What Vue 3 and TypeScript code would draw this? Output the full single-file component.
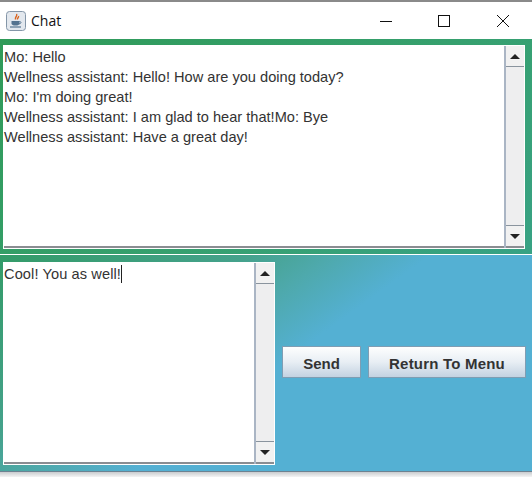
<script setup lang="ts">
const lines: string[] = [
  'Mo: Hello',
  'Wellness assistant: Hello! How are you doing today?',
  "Mo: I'm doing great!",
  'Wellness assistant: I am glad to hear that!Mo: Bye',
  'Wellness assistant: Have a great day!',
]
</script>

<template>
  <div class="window">
    <header class="titlebar">
      <div class="title-left">
        <svg class="java-icon" width="20" height="20" viewBox="0 0 20 20">
          <rect x="0.5" y="0.5" width="19" height="19" rx="3" fill="#e3e8ee" stroke="#8496a8" />
          <path d="M10.5 3c1.5 1.8-2 3 -1 5.5M12.5 5c.6 1.4-1.6 2-1 3.5" fill="none" stroke="#d9641e" stroke-width="1.4" />
          <path d="M5.5 10h8v2.2c0 1.5-1.5 2.3-4 2.3s-4-.8-4-2.3z" fill="#54738f" />
          <path d="M13.5 10.5c2 0 2 2.2-.5 2.4" fill="none" stroke="#54738f" />
          <path d="M4 16h11" stroke="#54738f" stroke-width="1.2" />
        </svg>
        <span class="title">Chat</span>
      </div>
      <div class="controls">
        <svg width="12" height="12" viewBox="0 0 12 12"><path d="M0 6.5h12" stroke="#111" /></svg>
        <svg width="12" height="12" viewBox="0 0 12 12"><rect x="0.5" y="0.5" width="11" height="11" fill="none" stroke="#111" /></svg>
        <svg width="14" height="14" viewBox="0 0 14 14"><path d="M1 1l12 12M13 1L1 13" stroke="#111" /></svg>
      </div>
    </header>

    <main class="content">
      <section class="panel top-panel">
        <div class="scroll-area log">
          <div class="text">
            <div v-for="line in lines" :key="line">{{ line }}</div>
          </div>
          <div class="scrollbar">
            <div class="arrow-btn"><span class="tri up"></span></div>
            <div class="track"></div>
            <div class="arrow-btn bottom"><span class="tri down"></span></div>
          </div>
        </div>
      </section>

      <section class="panel bottom-panel">
        <div class="scroll-area input">
          <div class="text"><span>Cool! You as well!</span><span class="caret"></span></div>
          <div class="scrollbar">
            <div class="arrow-btn"><span class="tri up"></span></div>
            <div class="track"></div>
            <div class="arrow-btn bottom"><span class="tri down"></span></div>
          </div>
        </div>
        <div class="buttons">
          <button class="btn send">Send</button>
          <button class="btn menu">Return To Menu</button>
        </div>
      </section>
    </main>
    <div class="shadow"></div>
  </div>
</template>

<style>
html, body { margin: 0; background: #fff; }
</style>

<style scoped>
.window {
  width: 532px;
  height: 477px;
  display: flex;
  flex-direction: column;
  overflow: hidden;
  background: #fff;
  font-family: "Liberation Sans", Arial, sans-serif;
}
.titlebar {
  height: 39px;
  box-sizing: border-box;
  border-top: 2px solid #8a8a8a;
  display: flex;
  align-items: center;
  justify-content: space-between;
  padding: 0 22px 0 6px;
  flex: none;
}
.title-left { display: flex; align-items: center; gap: 5px; }
.java-icon { display: block; }
.title { font-family: "Open Sans", "Noto Sans", sans-serif; font-size: 14px; color: #111; }
.controls { display: flex; align-items: center; gap: 46px; }
.controls svg { display: block; }
.content { flex: none; height: 432px; display: flex; flex-direction: column; background: #fff; }
.panel { box-sizing: border-box; }
.top-panel {
  height: 215px;
  flex: none;
  padding: 6px 7px 0 3px;
  background: linear-gradient(144deg, #2f9a58 0%, #36a06e 55%, #38a284 100%);
}
.bottom-panel {
  flex: 1;
  margin-top: 1px;
  padding: 7px 6px 0 3px;
  display: flex;
  background: linear-gradient(144deg, #339b68 0%, #45a28c 30%, #4ea9ac 40%, #54b0d3 52%, #54b0d3 100%);
}
.scroll-area {
  box-sizing: border-box;
  display: flex;
  background: #fff;
  border: 1px solid #fff;
}
.log { width: 522px; height: 204px; }
.input { width: 272px; height: 203px; flex: none; }
.text {
  flex: 1;
  min-width: 0;
  padding: 1px 0 0 0;
  font-size: 14.6px;
  line-height: 20px;
  color: #333;
  border-bottom: 2px solid #8a8d92;
  background: #fff;
  white-space: nowrap;
}
.input .text { letter-spacing: 0.1px; }
.caret {
  display: inline-block;
  width: 1px;
  height: 18px;
  background: #222;
  vertical-align: -4px;
}
.scrollbar {
  width: 20px;
  flex: none;
  display: flex;
  flex-direction: column;
  border-left: 2px solid #aab5c4;
  box-sizing: border-box;
  background: #eeeef0;
}
.arrow-btn {
  height: 20px;
  flex: none;
  display: flex;
  align-items: center;
  justify-content: center;
  background: #f1f1f1;
  border-bottom: 1px solid #8a949e;
}
.arrow-btn.bottom { border-bottom: 2px solid #8a8d92; border-top: 1px solid #8a949e; }
.track { flex: 1; background: #eeeeef; }
.tri { width: 0; height: 0; border-left: 5px solid transparent; border-right: 5px solid transparent; }
.tri.up { border-bottom: 5px solid #222; }
.tri.down { border-top: 5px solid #222; }
.buttons {
  flex: 1;
  display: flex;
  align-items: flex-start;
  gap: 7px;
  padding: 84px 0 0 7px;
}
.btn {
  height: 32px;
  box-sizing: border-box;
  border: 1px solid #7f9db3;
  background: linear-gradient(180deg, #fdfefe 0%, #e8eef4 50%, #c3d2e1 100%);
  font-family: "Liberation Sans", Arial, sans-serif;
  font-weight: bold;
  font-size: 15px;
  color: #333;
  padding: 3px 0 0;
}
.send { width: 79px; }
.menu { width: 158px; letter-spacing: 0.2px; }
.shadow {
  flex: 1;
  background: linear-gradient(180deg, #c9cccf 0%, #f4f4f4 100%);
  border-top: 1px solid #6d8291;
}
</style>
